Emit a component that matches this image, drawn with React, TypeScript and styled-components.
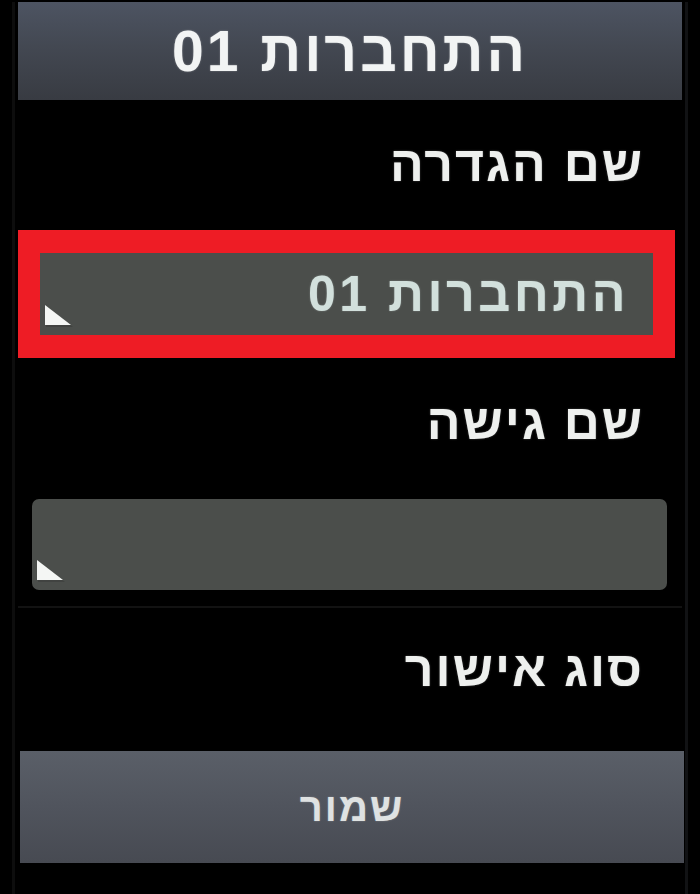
import styled, { createGlobalStyle } from "styled-components";

const GlobalStyle = createGlobalStyle`
  html, body {
    margin: 0;
    padding: 0;
    background: #000;
  }
  body {
    font-family: "Liberation Sans", "DejaVu Sans", Arial, sans-serif;
  }
`;

const Screen = styled.div`
  direction: rtl;
  width: 700px;
  height: 894px;
  box-sizing: border-box;
  padding: 2px 12px 0 12px;
  background: #000;
  overflow: hidden;
`;

const Frame = styled.div`
  display: flex;
  flex-direction: column;
  border-left: 3px solid #0d0d0d;
  border-right: 3px solid #111214;
  padding: 0 3px;
  height: 100%;
  box-sizing: border-box;
`;

const Header = styled.div`
  height: 98px;
  display: flex;
  align-items: center;
  justify-content: center;
  background: linear-gradient(#4d5462 0%, #434852 45%, #383b42 100%);
  color: #f2f4f4;
  font-size: 57px;
  font-weight: bold;
  letter-spacing: 3px;
  text-shadow: 0 0 2px rgba(255, 255, 255, 0.35);
`;

const Label = styled.div<{ $top: number; $bottom: number }>`
  color: #eef0ee;
  font-size: 50px;
  font-weight: bold;
  letter-spacing: 2px;
  line-height: 1;
  padding: ${(p) => p.$top}px 38px ${(p) => p.$bottom}px 0;
  text-shadow: 0 0 2px rgba(255, 255, 255, 0.3);
`;

const Highlight = styled.div`
  margin-right: 7px;
  border: 22px solid #ee1c25;
  border-top-width: 23px;
  border-bottom-width: 23px;
  background: #ee1c25;
`;

const Field = styled.div<{ $height: number; $rounded?: boolean }>`
  position: relative;
  height: ${(p) => p.$height}px;
  background: #4b4e4b;
  border-radius: ${(p) => (p.$rounded ? "7px" : "0")};
  display: flex;
  align-items: center;
  padding-right: 24px;
  color: #d2e0dc;
  font-size: 50px;
  font-weight: bold;
  letter-spacing: 3.5px;
  text-shadow: 0 0 2px rgba(220, 235, 235, 0.35);
`;

const FieldBlock = styled.div`
  padding: 0 15px 0 14px;
`;

const Corner = styled.svg`
  position: absolute;
  left: 3px;
  bottom: 6px;
  width: 32px;
  height: 26px;
`;

const Separator = styled.div`
  height: 2px;
  background: #121212;
  margin-top: 16px;
`;

const SaveButton = styled.button`
  margin-top: 57px;
  height: 112px;
  border: none;
  background: linear-gradient(#5a5f68 0%, #50545d 50%, #474a52 100%);
  color: #dfe2e2;
  font-family: inherit;
  font-size: 40px;
  font-weight: bold;
  letter-spacing: 2px;
  text-shadow: 0 0 2px rgba(255, 255, 255, 0.3);
  margin-left: 2px;
  margin-right: -2px;
`;

function CornerMark() {
  return (
    <Corner viewBox="0 0 32 26">
      <polygon points="3,4 3,24 30,24" fill="#3a3c3a" opacity="0.6" />
      <polygon points="2,2 2,22 28,22" fill="#f4f6f4" />
    </Corner>
  );
}

export default function App() {
  return (
    <>
      <GlobalStyle />
      <Screen>
        <Frame>
          <Header>התחברות 01</Header>
          <Label $top={39} $bottom={41}>
            שם הגדרה
          </Label>
          <Highlight>
            <Field $height={82}>
              התחברות 01
              <CornerMark />
            </Field>
          </Highlight>
          <Label $top={39} $bottom={52}>
            שם גישה
          </Label>
          <FieldBlock>
            <Field $height={91} $rounded>
              <CornerMark />
            </Field>
          </FieldBlock>
          <Separator />
          <Label $top={36} $bottom={0}>
            סוג אישור
          </Label>
          <SaveButton>שמור</SaveButton>
        </Frame>
      </Screen>
    </>
  );
}
